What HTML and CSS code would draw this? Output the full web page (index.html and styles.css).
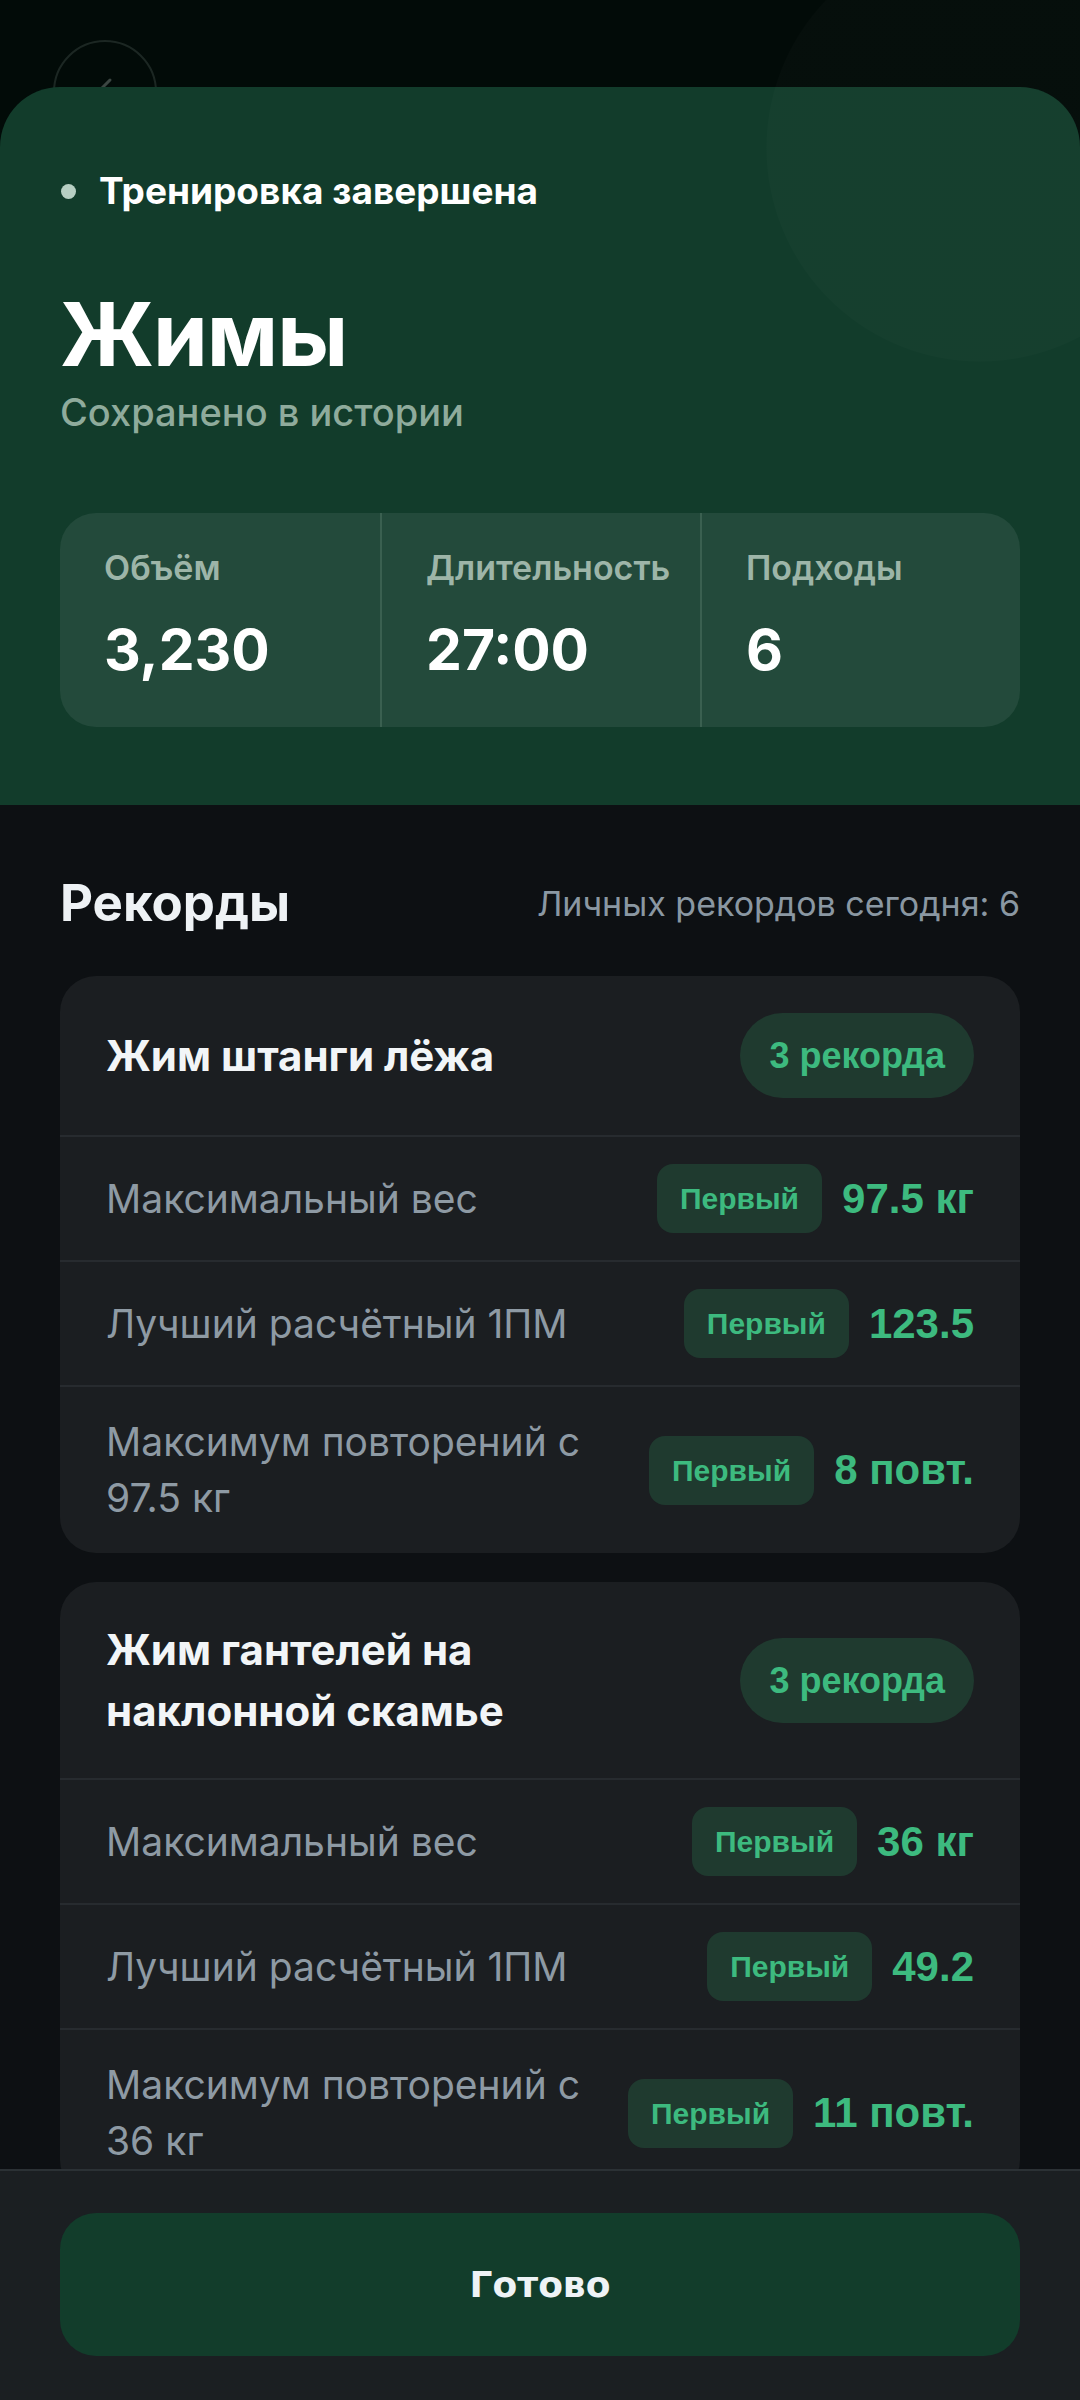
FILE: index.html
```html
<!DOCTYPE html>
<html lang="ru">
<head>
  <meta charset="utf-8">
  <title>Тренировка завершена</title>
  <link rel="stylesheet" href="styles.css">
</head>
<body>
  <div class="top">
    <div class="topbar">
      <button class="back" aria-label="Назад">
        <svg width="40" height="40" viewBox="0 0 40 40"><path d="M25 8 L13 20 L25 32" fill="none" stroke="#3c4642" stroke-width="3" stroke-linecap="round" stroke-linejoin="round"/></svg>
      </button>
    </div>

    <section class="hero">
      <div class="status"><span class="dot"></span>Тренировка завершена</div>
      <h1 class="title">Жимы</h1>
      <p class="subtitle">Сохранено в истории</p>
      <div class="stats">
        <div class="stat">
          <div class="stat-label">Объём</div>
          <div class="stat-value">3,230</div>
        </div>
        <div class="stat">
          <div class="stat-label">Длительность</div>
          <div class="stat-value">27:00</div>
        </div>
        <div class="stat">
          <div class="stat-label">Подходы</div>
          <div class="stat-value">6</div>
        </div>
      </div>
    </section>

    <div class="glow"></div>
  </div>

  <main class="records">
    <div class="records-head">
      <h2>Рекорды</h2>
      <span class="records-count">Личных рекордов сегодня: 6</span>
    </div>

    <div class="card">
      <div class="card-head">
        <div class="card-title">Жим штанги лёжа</div>
        <span class="pill">3 рекорда</span>
      </div>
      <div class="row">
        <div class="row-label">Максимальный вес</div>
        <div class="row-right"><span class="badge">Первый</span><span class="value">97.5 кг</span></div>
      </div>
      <div class="row">
        <div class="row-label">Лучший расчётный 1ПМ</div>
        <div class="row-right"><span class="badge">Первый</span><span class="value">123.5</span></div>
      </div>
      <div class="row">
        <div class="row-label">Максимум повторений с 97.5 кг</div>
        <div class="row-right"><span class="badge">Первый</span><span class="value">8 повт.</span></div>
      </div>
    </div>

    <div class="card">
      <div class="card-head">
        <div class="card-title">Жим гантелей на наклонной скамье</div>
        <span class="pill">3 рекорда</span>
      </div>
      <div class="row">
        <div class="row-label">Максимальный вес</div>
        <div class="row-right"><span class="badge">Первый</span><span class="value">36 кг</span></div>
      </div>
      <div class="row">
        <div class="row-label">Лучший расчётный 1ПМ</div>
        <div class="row-right"><span class="badge">Первый</span><span class="value">49.2</span></div>
      </div>
      <div class="row">
        <div class="row-label">Максимум повторений с 36 кг</div>
        <div class="row-right"><span class="badge">Первый</span><span class="value">11 повт.</span></div>
      </div>
    </div>
  </main>

  <footer class="footer">
    <button class="done">Готово</button>
  </footer>
</body>
</html>
```

FILE: styles.css
```css
html, body {
  margin: 0;
  padding: 0;
}
* {
  box-sizing: border-box;
}
body {
  background-color: #0d1013;
  font-family: Inter, "Noto Sans", sans-serif;
  color: #ffffff;
  overflow-x: hidden;
  min-height: 2400px;
}

.top {
  position: relative;
  background-color: #020b08;
}
.topbar {
  height: 87px;
  padding: 40px 0 0 53px;
}
.back {
  width: 104px;
  height: 104px;
  border-radius: 50%;
  border: 2px solid #1c2723;
  background: transparent;
  padding: 0;
  display: flex;
  align-items: center;
  justify-content: center;
}

/* faint circle at the top right corner */
.glow {
  position: absolute;
  top: 0;
  right: 0;
  width: 314px;
  height: 362px;
  z-index: 2;
  pointer-events: none;
  background: radial-gradient(circle at 214px 148px, rgba(255, 255, 255, 0.014) 213px, rgba(255, 255, 255, 0) 214px);
}

.hero {
  position: relative;
  z-index: 1;
  background-color: #123c2b;
  border-radius: 60px 60px 0 0;
  padding: 82px 60px 78px;
}
.status {
  display: flex;
  align-items: center;
  gap: 23px;
  font-size: 37px;
  font-weight: 700;
  line-height: 44px;
  padding-left: 1px;
}
.dot {
  width: 15px;
  height: 15px;
  border-radius: 50%;
  background-color: #b7cfc3;
}
.title {
  margin: 72px 0 0;
  font-size: 88px;
  font-weight: 700;
  line-height: 99px;
  letter-spacing: -1px;
}
.subtitle {
  margin: 4px 0 0;
  font-size: 38px;
  line-height: 48px;
  font-weight: 500;
  color: #8fab9c;
}

.stats {
  margin-top: 77px;
  display: grid;
  grid-template-columns: repeat(3, minmax(0, 1fr));
  background-color: #234a3b;
  border-radius: 36px;
}
.stat {
  padding: 34px 0 42px 44px;
  white-space: nowrap;
}
.stat + .stat {
  border-left: 2px solid #3a6050;
}
.stat-label {
  font-size: 34px;
  font-weight: 600;
  line-height: 42px;
  color: #9db5a8;
}
.stat-value {
  margin-top: 26px;
  font-size: 57px;
  font-weight: 700;
  line-height: 70px;
}

.records {
  padding: 68px 60px 260px;
}
.records-head {
  display: flex;
  justify-content: space-between;
  align-items: center;
  margin-bottom: 43px;
}
.records-head h2 {
  margin: 0;
  font-size: 51px;
  line-height: 60px;
  font-weight: 700;
  color: #eef2f5;
}
.records-count {
  font-size: 34px;
  color: #8a97a2;
}

.card {
  background-color: #1b1e21;
  border-radius: 36px;
  margin-bottom: 29px;
  overflow: hidden;
}
.card-head {
  display: flex;
  align-items: center;
  justify-content: space-between;
  gap: 40px;
  padding: 37px 46px;
}
.card-title {
  font-size: 42px;
  font-weight: 700;
  line-height: 61px;
  color: #f2f5f7;
  max-width: 580px;
}
.pill {
  flex-shrink: 0;
  background-color: #1f3a2f;
  color: #3dba7f;
  font-family: "Liberation Sans", Arial, sans-serif;
  font-weight: 700;
  font-size: 36px;
  line-height: 85px;
  padding: 0 29px;
  border-radius: 43px;
}
.row {
  display: flex;
  align-items: center;
  justify-content: space-between;
  gap: 30px;
  padding: 27px 46px;
  border-top: 2px solid #272b2f;
}
.row-label {
  font-size: 39px;
  line-height: 56px;
  color: #8e9aa4;
}
.row-right {
  display: flex;
  align-items: center;
  gap: 20px;
  flex-shrink: 0;
}
.badge {
  background-color: #1f3a2f;
  color: #3dba7f;
  font-family: "Liberation Sans", Arial, sans-serif;
  font-weight: 700;
  font-size: 30px;
  line-height: 69px;
  padding: 0 23px;
  border-radius: 16px;
}
.value {
  color: #3dba7f;
  font-family: "Liberation Sans", Arial, sans-serif;
  font-weight: 700;
  font-size: 42px;
}

.footer {
  position: fixed;
  left: 0;
  right: 0;
  bottom: 0;
  z-index: 3;
  background-color: #1b1f22;
  border-top: 2px solid #2b3135;
  padding: 42px 60px 44px;
}
.done {
  display: block;
  width: 100%;
  height: 143px;
  border: none;
  border-radius: 36px;
  background-color: #123d2b;
  color: #eef3f6;
  font-family: "DejaVu Sans", sans-serif;
  font-weight: 700;
  font-size: 36px;
}
```
